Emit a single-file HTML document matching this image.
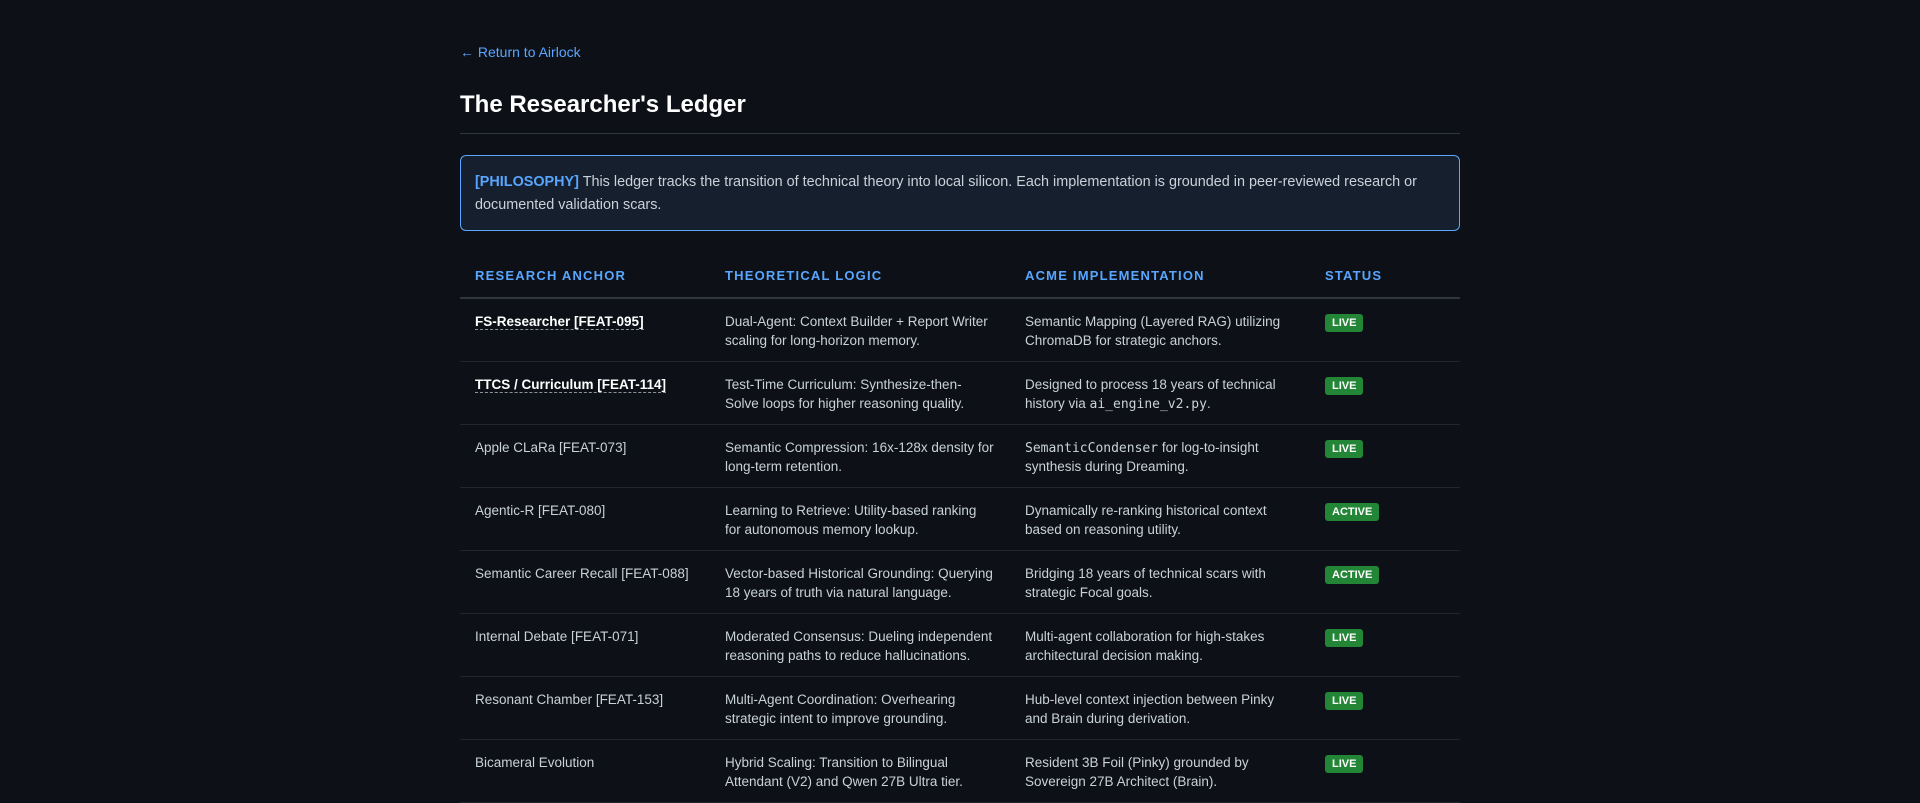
<!DOCTYPE html>
<html><head><meta charset="utf-8"><style>
html,body{margin:0;background:#0d1117;}
body{font-family:"Liberation Sans",Arial,sans-serif;color:#c9d1d9;width:1920px;height:800px;overflow:hidden;}
.wrap{position:absolute;left:460px;top:0;width:1000px;}
.back{position:absolute;top:44px;left:0;font-size:14px;color:#58a6ff;text-decoration:none;}
h1{position:absolute;top:90px;left:0;margin:0;font-size:24px;line-height:30px;color:#fff;font-weight:bold;}
.rule{position:absolute;top:133px;left:0;width:1000px;height:1px;background:#30363d;}
.phil{position:absolute;top:155px;left:0;width:970px;height:47px;padding:15px 14px 12px 14px;border:1px solid #58a6ff;border-radius:6px;background:#161f2d;font-size:14.4px;line-height:23px;color:#c9d1d9;}
.phil b{color:#58a6ff;}
table{position:absolute;top:254px;left:0;width:1000px;border-collapse:collapse;font-size:13.5px;line-height:19px;}
th{text-align:left;color:#58a6ff;font-size:13px;letter-spacing:1.2px;text-transform:uppercase;font-weight:bold;height:43px;padding:0 15px;border-bottom:2px solid #30363d;vertical-align:middle;}
td{vertical-align:top;padding:13px 15px 11px 15px;height:38px;border-bottom:1px solid #21262d;}
td.a b{color:#fff;border-bottom:1px dashed #8b949e;}
code{font-family:"DejaVu Sans Mono","Liberation Mono",monospace;font-size:13px;line-height:15px;}
.bd{display:inline-block;background:#238636;color:#fff;font-weight:bold;font-size:11px;line-height:18px;padding:0 7px;border-radius:3px;margin-top:1px;}
</style></head><body><div class="wrap">
<a class="back" href="#">← Return to Airlock</a>
<h1>The Researcher's Ledger</h1>
<div class="rule"></div>
<div class="phil"><b>[PHILOSOPHY]</b> This ledger tracks the transition of technical theory into local silicon. Each implementation is grounded in peer-reviewed research or documented validation scars.</div>
<table>
<colgroup><col style="width:250px"><col style="width:300px"><col style="width:300px"><col style="width:150px"></colgroup>
<tr><th>Research Anchor</th><th>Theoretical Logic</th><th>Acme Implementation</th><th>Status</th></tr>
<tr><td class="a"><b>FS-Researcher [FEAT-095]</b></td><td>Dual-Agent: Context Builder + Report Writer scaling for long-horizon memory.</td><td>Semantic Mapping (Layered RAG) utilizing ChromaDB for strategic anchors.</td><td><span class="bd">LIVE</span></td></tr>
<tr><td class="a"><b>TTCS / Curriculum [FEAT-114]</b></td><td>Test-Time Curriculum: Synthesize-then-Solve loops for higher reasoning quality.</td><td>Designed to process 18 years of technical history via <code>ai_engine_v2.py</code>.</td><td><span class="bd">LIVE</span></td></tr>
<tr><td>Apple CLaRa [FEAT-073]</td><td>Semantic Compression: 16x-128x density for long-term retention.</td><td><code>SemanticCondenser</code> for log-to-insight synthesis during Dreaming.</td><td><span class="bd">LIVE</span></td></tr>
<tr><td>Agentic-R [FEAT-080]</td><td>Learning to Retrieve: Utility-based ranking for autonomous memory lookup.</td><td>Dynamically re-ranking historical context based on reasoning utility.</td><td><span class="bd">ACTIVE</span></td></tr>
<tr><td>Semantic Career Recall [FEAT-088]</td><td>Vector-based Historical Grounding: Querying 18 years of truth via natural language.</td><td>Bridging 18 years of technical scars with strategic Focal goals.</td><td><span class="bd">ACTIVE</span></td></tr>
<tr><td>Internal Debate [FEAT-071]</td><td>Moderated Consensus: Dueling independent reasoning paths to reduce hallucinations.</td><td>Multi-agent collaboration for high-stakes architectural decision making.</td><td><span class="bd">LIVE</span></td></tr>
<tr><td>Resonant Chamber [FEAT-153]</td><td>Multi-Agent Coordination: Overhearing strategic intent to improve grounding.</td><td>Hub-level context injection between Pinky and Brain during derivation.</td><td><span class="bd">LIVE</span></td></tr>
<tr><td>Bicameral Evolution</td><td>Hybrid Scaling: Transition to Bilingual Attendant (V2) and Qwen 27B Ultra tier.</td><td>Resident 3B Foil (Pinky) grounded by Sovereign 27B Architect (Brain).</td><td><span class="bd">LIVE</span></td></tr>
</table>
</div></body></html>
